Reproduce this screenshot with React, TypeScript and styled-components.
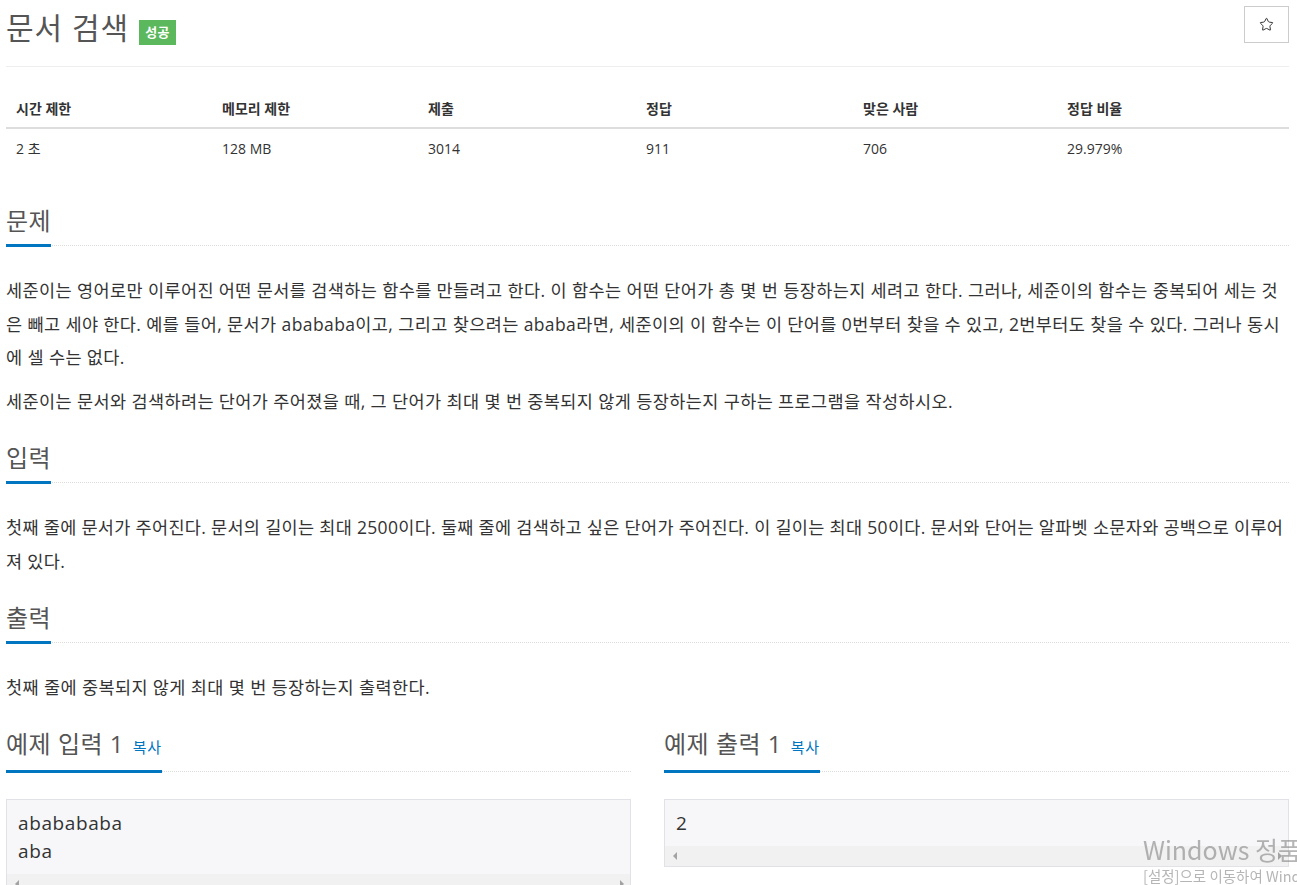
import React from 'react';
import styled, { createGlobalStyle } from 'styled-components';
import { Star } from 'lucide-react';

const FONT = `'Open Sans', 'Noto Sans CJK KR', sans-serif`;

const GlobalStyle = createGlobalStyle`
  html, body {
    margin: 0;
    padding: 0;
    background: #fff;
    overflow: hidden;
  }
  body {
    font-family: ${FONT};
    color: #333;
  }
  * {
    box-sizing: border-box;
  }
`;

const limits = [
  { label: '시간 제한', value: '2 초', width: 206 },
  { label: '메모리 제한', value: '128 MB', width: 206 },
  { label: '제출', value: '3014', width: 218 },
  { label: '정답', value: '911', width: 217 },
  { label: '맞은 사람', value: '706', width: 204 },
  { label: '정답 비율', value: '29.979%' },
];

/** 문제 페이지 */
export default function App() {
  return (
    <React.Fragment>
      <GlobalStyle />
      <Page>
        {/* 제목 */}
        <TitleRow>
          <Title>
            문서 검색
            <Badge>성공</Badge>
          </Title>
          <StarButton type="button">
            <Star size={15} strokeWidth={1.6} />
          </StarButton>
        </TitleRow>
        <Divider />

        {/* 제한 정보 */}
        <InfoTable>
          <colgroup>
            {limits.map(item => (
              <col key={item.label} style={item.width ? { width: item.width } : undefined} />
            ))}
          </colgroup>
          <thead>
            <tr>
              {limits.map(item => (
                <th key={item.label}>{item.label}</th>
              ))}
            </tr>
          </thead>
          <tbody>
            <tr>
              {limits.map(item => (
                <td key={item.label}>{item.value}</td>
              ))}
            </tr>
          </tbody>
        </InfoTable>

        <Section $top={41}>
          <Headline>
            <span>문제</span>
          </Headline>
          <Body>
            <p>
              세준이는 영어로만 이루어진 어떤 문서를 검색하는 함수를 만들려고 한다. 이 함수는 어떤 단어가 총 몇 번
              등장하는지 세려고 한다. 그러나, 세준이의 함수는 중복되어 세는 것은 빼고 세야 한다. 예를 들어, 문서가
              abababa이고, 그리고 찾으려는 ababa라면, 세준이의 이 함수는 이 단어를 0번부터 찾을 수 있고, 2번부터도 찾을
              수 있다. 그러나 동시에 셀 수는 없다.
            </p>
            <p>세준이는 문서와 검색하려는 단어가 주어졌을 때, 그 단어가 최대 몇 번 중복되지 않게 등장하는지 구하는 프로그램을 작성하시오.</p>
          </Body>
        </Section>

        <Section $top={27}>
          <Headline>
            <span>입력</span>
          </Headline>
          <Body $tracking={0.32}>
            <p>
              첫째 줄에 문서가 주어진다. 문서의 길이는 최대 2500이다. 둘째 줄에 검색하고 싶은 단어가 주어진다. 이 길이는
              최대 50이다. 문서와 단어는 알파벳 소문자와 공백으로 이루어져 있다.
            </p>
          </Body>
        </Section>

        <Section $top={27}>
          <Headline>
            <span>출력</span>
          </Headline>
          <Body>
            <p>첫째 줄에 중복되지 않게 최대 몇 번 등장하는지 출력한다.</p>
          </Body>
        </Section>

        {/* 예제 */}
        <Samples>
          <SampleColumn>
            <Headline>
              <span>
                예제 입력 1 <CopyLink>복사</CopyLink>
              </span>
            </Headline>
            <SampleBox>
              <Code>{'ababababa\naba'}</Code>
              <ScrollTrack>
                <Arrow $side="left" />
                <Arrow $side="right" />
              </ScrollTrack>
            </SampleBox>
          </SampleColumn>
          <SampleColumn>
            <Headline>
              <span>
                예제 출력 1 <CopyLink>복사</CopyLink>
              </span>
            </Headline>
            <SampleBox>
              <Code>2</Code>
              <ScrollTrack>
                <Arrow $side="left" />
                <Arrow $side="right" />
              </ScrollTrack>
            </SampleBox>
          </SampleColumn>
        </Samples>
      </Page>

      {/* 정품 인증 워터마크 */}
      <Watermark>
        <div className="big">Windows 정품 인증</div>
        <div className="small">[설정]으로 이동하여 Windows를 정품 인증합니다.</div>
      </Watermark>
    </React.Fragment>
  );
}

const Page = styled.div`
  margin-left: 6px;
  width: 1283px;
`;

// 제목
const TitleRow = styled.div`
  display: flex;
  justify-content: space-between;
  align-items: flex-start;
  padding-top: 6px;
`;

const Title = styled.h1`
  margin: 0;
  display: flex;
  align-items: flex-start;
  font-size: 30px;
  line-height: 44px;
  font-weight: 400;
  color: #555;
  letter-spacing: 1px;
`;

const Badge = styled.span`
  margin-left: 10px;
  margin-top: 14px;
  height: 25px;
  padding: 0 6px;
  background: #5cb85c;
  color: #fff;
  font-size: 13px;
  font-weight: 700;
  line-height: 25px;
  letter-spacing: 0.3px;
`;

const StarButton = styled.button`
  width: 45px;
  height: 37px;
  display: flex;
  align-items: center;
  justify-content: center;
  background: #fff;
  border: 1px solid #ccc;
  color: #333;
  padding: 0;
  cursor: pointer;
`;

const Divider = styled.hr`
  margin: 16px 0 0;
  border: 0;
  border-top: 1px solid #eee;
`;

// 제한 정보 표
const InfoTable = styled.table`
  width: 100%;
  margin-top: 23px;
  border-collapse: collapse;
  table-layout: fixed;
  font-size: 14px;
  color: #333;

  th,
  td {
    text-align: left;
    padding: 8px 10px;
    line-height: 21px;
  }

  td {
    padding-top: 9px;
  }

  th {
    font-weight: 700;
    border-bottom: 2px solid #ddd;
  }
`;

// 섹션
const Section = styled.section<{ $top: number }>`
  margin-top: ${p => p.$top}px;
`;

const Headline = styled.h2`
  margin: 0;
  display: flex;
  font-size: 24px;
  line-height: 26px;
  font-weight: 400;
  color: #555;
  letter-spacing: 0.5px;
  border-bottom: 1px dotted #ddd;

  > span {
    display: inline-block;
    padding-bottom: 10px;
    margin-bottom: -2px;
    border-bottom: 3px solid #0076c0;
  }
`;

const CopyLink = styled.a`
  margin-left: 2px;
  font-size: 15px;
  letter-spacing: 0.8px;
  color: #0076c0;
  cursor: pointer;
`;

const Body = styled.div<{ $tracking?: number }>`
  margin-top: 28px;
  font-size: 17.5px;
  line-height: 33.5px;
  color: #333;
  letter-spacing: ${p => p.$tracking ?? 0.4}px;

  p {
    margin: 0 0 10px;
  }

  p:last-child {
    margin-bottom: 0;
  }
`;

// 예제
const Samples = styled.div`
  margin-top: 26px;
  display: grid;
  grid-template-columns: 625px 625px;
  column-gap: 33px;
`;

const SampleColumn = styled.div`
  display: flex;
  flex-direction: column;
`;

const SampleBox = styled.div`
  margin-top: 27px;
  border: 1px solid #e1e1e8;
  background: #f7f7f9;
`;

const Code = styled.pre`
  margin: 0;
  padding: 9px 11px;
  font-family: ${FONT};
  font-size: 19px;
  line-height: 28px;
  letter-spacing: 0.6px;
  color: #333;
  white-space: pre;
`;

const ScrollTrack = styled.div`
  height: 20px;
  background: #f1f1f1;
  display: flex;
  align-items: center;
  justify-content: space-between;
  padding: 0 6px 0 8px;
`;

const Arrow = styled.span<{ $side: 'left' | 'right' }>`
  width: 0;
  height: 0;
  border-top: 4px solid transparent;
  border-bottom: 4px solid transparent;
  ${p => (p.$side === 'left' ? 'border-right: 4px solid #a3a3a3;' : 'border-left: 4px solid #a3a3a3;')}
`;

const Watermark = styled.div`
  position: fixed;
  left: 1143px;
  right: 0;
  top: 832px;
  overflow: hidden;
  white-space: nowrap;
  color: rgba(120, 120, 120, 0.55);
  font-family: 'Noto Sans CJK KR', sans-serif;
  pointer-events: none;

  .big {
    font-size: 25px;
    line-height: 34px;
  }

  .small {
    font-size: 14.5px;
    line-height: 20px;
  }
`;
